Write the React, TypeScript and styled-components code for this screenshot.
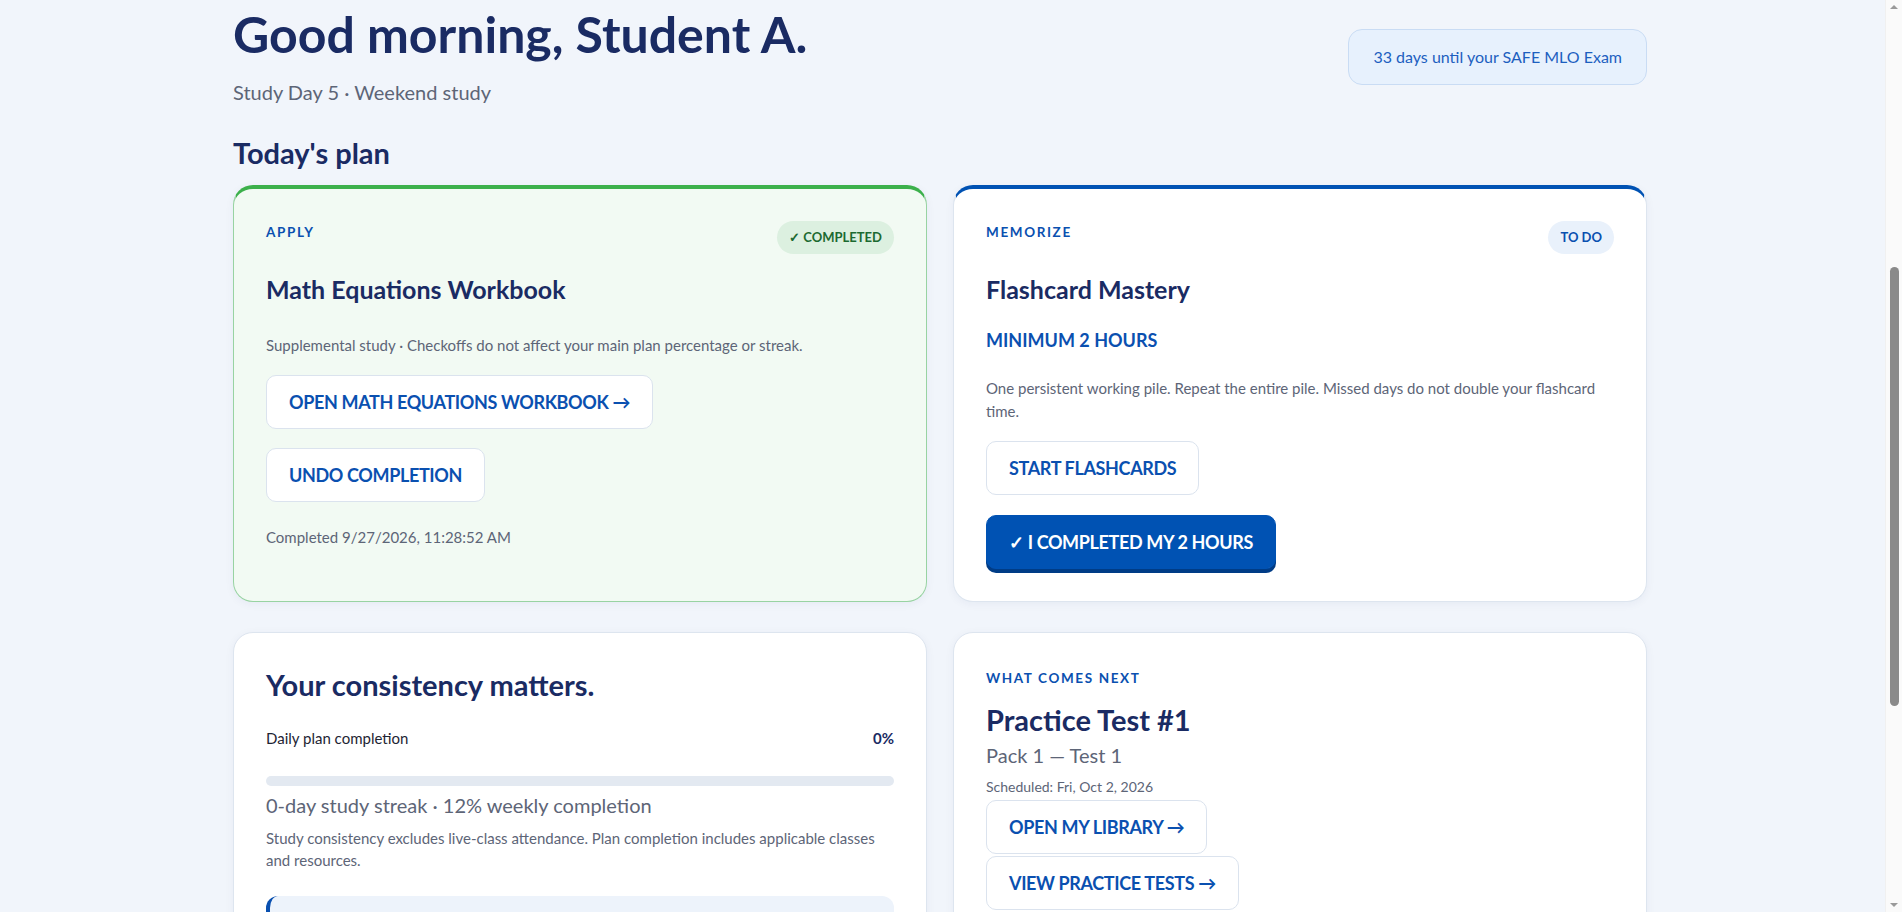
import React from 'react';
import styled, { createGlobalStyle, css } from 'styled-components';

const GlobalStyle = createGlobalStyle`
  html, body {
    margin: 0;
    padding: 0;
    background: #f1f5fb;
  }

  body {
    font-family: 'Lato', 'Segoe UI', 'Noto Sans', sans-serif;
    color: #1e2433;
  }

  * {
    box-sizing: border-box;
  }
`;

// leaves room on the right for the scroll rail
const Page = styled.main`
  padding: 7px 22px 64px 0;
`;

const Container = styled.div`
  max-width: 1414px;
  margin: 0 auto;
`;

const ScrollRail = styled.div`
  position: fixed;
  top: 0;
  right: 0;
  bottom: 0;
  width: 17px;
  background: #fafafa;
  border-left: 1px solid #f0f0f0;
`;

const RailArrow = styled.span<{ $dir: 'up' | 'down' }>`
  position: absolute;
  left: 4px;
  width: 0;
  height: 0;
  border-left: 4px solid transparent;
  border-right: 4px solid transparent;

  ${p =>
    p.$dir === 'up'
      ? css`
          top: 5px;
          border-bottom: 4px solid #9a9a9a;
        `
      : css`
          bottom: 5px;
          border-top: 4px solid #9a9a9a;
        `}
`;

const RailThumb = styled.span`
  position: absolute;
  left: 4px;
  width: 9px;
  border-radius: 5px;
  background: #8a8a8a;
`;

const Header = styled.header`
  display: flex;
  justify-content: space-between;
  align-items: center;
`;

const Greeting = styled.h1`
  margin: 0;
  font-size: 50px;
  line-height: 1.1;
  font-weight: 700;
  color: #1a2b63;
`;

const DayLine = styled.p`
  margin: 15px 0 0;
  font-size: 20px;
  line-height: 1.5;
  color: #5d6577;
`;

const ExamPill = styled.div`
  padding: 15px 24px;
  border: 1px solid #c9dcf4;
  border-radius: 14px;
  background: #e7f1fd;
  color: #1d5fc0;
  font-size: 16px;
  line-height: 1.5;
`;

const SectionTitle = styled.h2`
  margin: 29px 0 14px;
  font-size: 29px;
  line-height: 1.2;
  font-weight: 700;
  color: #1a2b63;
`;

const Grid = styled.div`
  display: grid;
  grid-template-columns: 1fr 1fr;
  column-gap: 26px;
  row-gap: 30px;
`;

const accents = {
  green: '#3cb04b',
  blue: '#0052b3',
};

const Card = styled.section<{ $accent?: 'green' | 'blue'; $done?: boolean }>`
  display: flex;
  flex-direction: column;
  min-width: 0;
  background: ${p => (p.$done ? '#f2faf3' : '#fff')};
  border: 1px solid ${p => (p.$done ? '#98d3a2' : '#dde5ef')};
  border-radius: 20px;
  padding: 32px;
  box-shadow: 0 2px 10px rgba(20, 45, 90, 0.05);

  ${p =>
    p.$accent &&
    css`
      border-top: 4px solid ${accents[p.$accent]};
    `}
`;

const CardHead = styled.div`
  display: flex;
  justify-content: space-between;
  align-items: flex-start;
`;

const Eyebrow = styled.div<{ $mt?: number }>`
  margin-top: ${p => p.$mt ?? 2}px;
  font-size: 13.5px;
  line-height: 1.45;
  font-weight: 700;
  letter-spacing: 0.12em;
  text-transform: uppercase;
  color: #0a50b0;
`;

const Status = styled.span<{ $done?: boolean }>`
  padding: 7px 12px;
  border-radius: 999px;
  font-size: 13px;
  line-height: 1.5;
  font-weight: 700;
  background: ${p => (p.$done ? '#dcf0e0' : '#e9f1fb')};
  color: ${p => (p.$done ? '#1c6a31' : '#0a50b0')};
`;

const CardTitle = styled.h3<{ $size?: number; $mt?: number }>`
  margin: ${p => p.$mt ?? 20}px 0 0;
  font-size: ${p => p.$size ?? 25}px;
  line-height: 1.2;
  font-weight: 700;
  color: #1a2b63;
`;

const Minimum = styled.div`
  margin-top: 23px;
  font-size: 18px;
  line-height: 1.5;
  font-weight: 700;
  color: #0a50b0;
`;

const Note = styled.p<{ $mt: number; $size?: number }>`
  margin: ${p => p.$mt}px 0 0;
  font-size: ${p => p.$size ?? 15}px;
  line-height: 1.5;
  color: #5d6577;
`;

const ActionButton = styled.button<{ $primary?: boolean; $mt?: number }>`
  align-self: flex-start;
  margin-top: ${p => p.$mt ?? 0}px;
  padding: 14px 22px;
  font-family: inherit;
  font-size: 18px;
  line-height: 24px;
  font-weight: 700;
  letter-spacing: -0.02em;
  text-transform: uppercase;
  color: #0a50b0;
  background: #fff;
  border: 1px solid #dbe3ee;
  border-radius: 10px;
  cursor: pointer;

  ${p =>
    p.$primary &&
    css`
      color: #fff;
      background: #0052b3;
      border-color: #0052b3;
      box-shadow: 0 4px 0 #003c86;
    `}
`;

const ButtonStack = styled.div`
  display: flex;
  flex-direction: column;
  align-items: flex-start;
  gap: 2px;
  margin-top: 3px;
`;

const StatRow = styled.div`
  display: flex;
  justify-content: space-between;
  margin-top: 24px;
  font-size: 15px;
  line-height: 1.5;

  strong {
    color: #1a2b63;
  }
`;

const Track = styled.div`
  height: 10px;
  margin-top: 26px;
  border-radius: 999px;
  background: #e3e9f1;
  overflow: hidden;
`;

const Fill = styled.div`
  height: 100%;
  background: #0052b3;
  border-radius: inherit;
`;

const Callout = styled.div`
  min-height: 88px;
  margin-top: 24px;
  border-left: 4px solid #0a50b0;
  border-radius: 12px;
  background: #edf3fb;
`;

const dailyCompletion = 0;

export default function App() {
  return (
    <>
      <GlobalStyle />
      <Page>
        <Container>
          <Header>
            <div>
              <Greeting>Good morning, Student A.</Greeting>
              <DayLine>Study Day 5 · Weekend study</DayLine>
            </div>
            <ExamPill>33 days until your SAFE MLO Exam</ExamPill>
          </Header>

          <SectionTitle>Today's plan</SectionTitle>

          <Grid>
            <Card $accent="green" $done>
              <CardHead>
                <Eyebrow>Apply</Eyebrow>
                <Status $done>✓ COMPLETED</Status>
              </CardHead>
              <CardTitle>Math Equations Workbook</CardTitle>
              <Note $mt={30}>Supplemental study · Checkoffs do not affect your main plan percentage or streak.</Note>
              <ActionButton $mt={18}>Open Math Equations Workbook →</ActionButton>
              <ActionButton $mt={19}>Undo completion</ActionButton>
              <Note $mt={24}>Completed 9/27/2026, 11:28:52 AM</Note>
            </Card>

            <Card $accent="blue">
              <CardHead>
                <Eyebrow>Memorize</Eyebrow>
                <Status>TO DO</Status>
              </CardHead>
              <CardTitle>Flashcard Mastery</CardTitle>
              <Minimum>MINIMUM 2 HOURS</Minimum>
              <Note $mt={23}>
                One persistent working pile. Repeat the entire pile. Missed days do not double your flashcard time.
              </Note>
              <ActionButton $mt={19}>Start flashcards</ActionButton>
              <ActionButton $mt={20} $primary>✓ I completed my 2 hours</ActionButton>
            </Card>

            <Card>
              <CardTitle $size={29} $mt={3}>Your consistency matters.</CardTitle>
              <StatRow>
                <span>Daily plan completion</span>
                <strong>{dailyCompletion}%</strong>
              </StatRow>
              <Track>
                <Fill style={{ width: `${dailyCompletion}%` }} />
              </Track>
              <Note $mt={4} $size={20}>0-day study streak · 12% weekly completion</Note>
              <Note $mt={7}>
                Study consistency excludes live-class attendance. Plan completion includes applicable classes and resources.
              </Note>
              <Callout />
            </Card>

            <Card>
              <Eyebrow $mt={4}>What comes next</Eyebrow>
              <CardTitle $size={29} $mt={14}>Practice Test #1</CardTitle>
              <Note $mt={2} $size={20}>Pack 1 — Test 1</Note>
              <Note $mt={6} $size={14}>Scheduled: Fri, Oct 2, 2026</Note>
              <ButtonStack>
                <ActionButton>Open my library →</ActionButton>
                <ActionButton>View practice tests →</ActionButton>
              </ButtonStack>
            </Card>
          </Grid>
        </Container>
      </Page>

      <ScrollRail aria-hidden>
        <RailArrow $dir="up" />
        <RailThumb style={{ top: 267, height: 439 }} />
        <RailArrow $dir="down" />
      </ScrollRail>
    </>
  );
}
